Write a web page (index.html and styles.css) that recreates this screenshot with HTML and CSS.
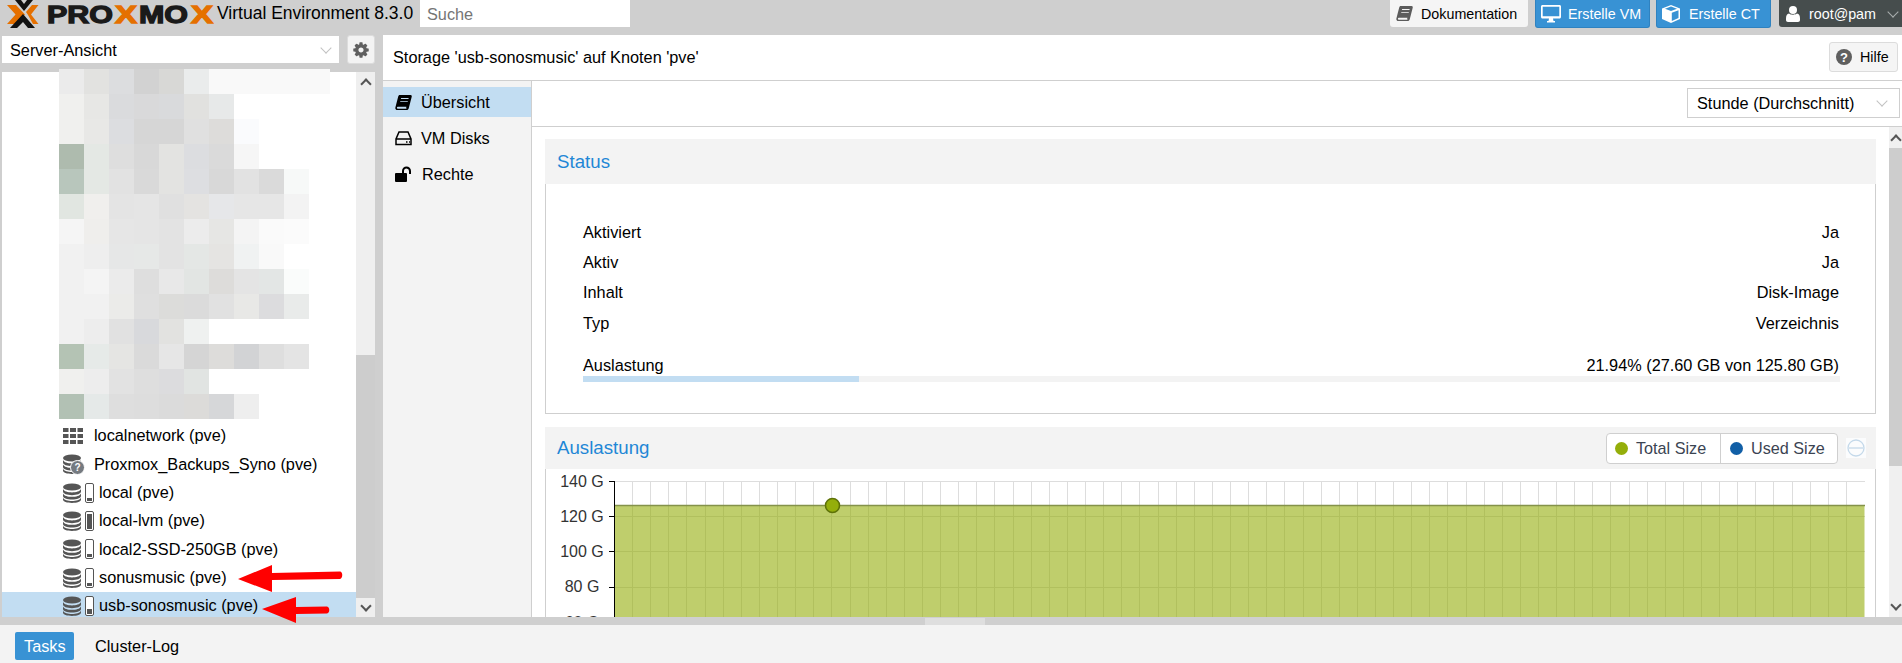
FILE: index.html
```html
<!DOCTYPE html>
<html lang="de">
<head>
<meta charset="utf-8">
<title>Proxmox Virtual Environment</title>
<link rel="stylesheet" href="styles.css">
</head>
<body>
<svg class="defs" width="0" height="0" aria-hidden="true">
  <symbol id="db" viewBox="0 0 18 20">
    <ellipse cx="9" cy="4" rx="9" ry="3.6"/>
    <path d="M0 6c1 2.4 5 3.4 9 3.4s8-1 9-3.4v2.6c0 2.2-4 3.6-9 3.6s-9-1.4-9-3.6z"/>
    <path d="M0 10.4c1 2.4 5 3.4 9 3.4s8-1 9-3.4V13c0 2.2-4 3.6-9 3.6S0 15.200 0 13z"/>
    <path d="M0 14.800c1 2.400 5 3.200 9 3.200s8-.8 9-3.200v1.800C18 18.800 14 20 9 20s-9-1.200-9-3.400z"/>
  </symbol>
  <symbol id="cog" viewBox="0 0 1792 1792">
    <path d="M1152 896q0-106-75-181t-181-75-181 75-75 181 75 181 181 75 181-75 75-181zm512-109v222q0 12-8 23t-20 13l-185 28q-19 54-39 91 35 50 107 138 10 12 10 25t-9 23q-27 37-99 108t-94 71q-12 0-26-9l-138-108q-44 23-91 38-16 136-29 186-7 28-36 28h-222q-14 0-24.500-8.500t-11.500-21.500l-28-184q-49-16-90-37l-141 107q-10 9-25 9-14 0-25-11-126-114-165-168-7-10-7-23 0-12 8-23 15-21 51-66.500t54-70.500q-27-50-41-99l-183-27q-13-2-21-12.500t-8-23.500v-222q0-12 8-23t19-13l186-28q14-46 39-92-40-57-107-138-10-12-10-24 0-10 9-23 26-36 98.500-107.500t94.500-71.500q13 0 26 10l138 107q44-23 91-38 16-136 29-186 7-28 36-28h222q14 0 24.500 8.500t11.500 21.500l28 184q49 16 90 37l142-107q9-9 24-9 13 0 25 10 129 119 165 170 7 8 7 22 0 12-8 23-15 21-51 66.500t-54 70.500q26 50 41 98l183 28q13 2 21 12.500t8 23.500z"/>
  </symbol>
  <symbol id="book" viewBox="0 0 18 18">
    <path d="M5 1h11.500c1 0 1.500.8 1.200 1.800l-3 11.700c-.3 1.300-1.200 2.500-2.700 2.500H2.700C1 17 0 15.700.4 14.200L3.400 2.600C3.600 1.600 4.200 1 5 1zm1.500 3.300-.3 1h8l.3-1zm-.8 3-.3 1h8l.3-1zM3 13.500c-.6 0-1 .4-1 1s.4 1 1 1h9.300c-.5-.5-.5-1.400-.2-2z" fill-rule="evenodd"/>
  </symbol>
</svg>

<div class="app">
  <header class="top">
    <div class="logo">
      <svg class="logo-x" width="46" height="28" viewBox="0 0 46 28">
        <path fill="#e57000" d="M7 5h9l9 9.500L16 24H7l8.500-9.500z"/>
        <path fill="#e57000" d="M38.500 5H32l-6 7 2 3 5 9h5.500L31 14.500z"/>
        <path fill="#111" d="M15 0h6l3 4 3-4h6L24 11zM10 28l13-14 12 14h-7l-5-6-6 6z"/>
      </svg>
      <svg class="logo-word" width="168" height="28" viewBox="46 0 168 28">
        <text x="47" y="23" textLength="66" lengthAdjust="spacingAndGlyphs" class="lw-k">PRO</text>
        <text x="115" y="23" textLength="22" lengthAdjust="spacingAndGlyphs" class="lw-o">X</text>
        <text x="139" y="23" textLength="49" lengthAdjust="spacingAndGlyphs" class="lw-k">MO</text>
        <text x="191" y="23" textLength="22" lengthAdjust="spacingAndGlyphs" class="lw-o">X</text>
      </svg>
    </div>
    <div class="version">Virtual Environment 8.3.0</div>
    <div class="search">Suche</div>
    <div class="top-actions">
      <div class="tbtn tbtn-light">
        <svg class="ti" width="17" height="17" fill="#5c5c5c"><use href="#book"/></svg>
        <span>Dokumentation</span>
      </div>
      <div class="tbtn tbtn-blue">
        <svg class="ti" width="20" height="18" viewBox="0 0 20 18" fill="#fff"><path fill-rule="evenodd" d="M1.500 0h17C19.300 0 20 .7 20 1.500v10.500c0 .8-.7 1.500-1.500 1.500H12l.5 2.500h1.500v1.500H6v-1.500h1.500L8 13.500H1.500C.7 13.500 0 12.800 0 12V1.500C0 .7.700 0 1.500 0zm.2 1.700v9.600h16.600V1.700z"/></svg>
        <span>Erstelle VM</span>
      </div>
      <div class="tbtn tbtn-blue">
        <svg class="ti" width="18" height="18" viewBox="0 0 18 18" fill="#fff"><path fill-rule="evenodd" d="M9 0l9 3.500v10.500L9 18 0 14V3.500zM3 3.700 9 6l6-2.300L9 1.500zM9.800 16l6.700-3V5.200L9.800 7.700z"/></svg>
        <span>Erstelle CT</span>
      </div>
      <div class="tbtn tbtn-dark">
        <svg class="ti" width="14" height="16" viewBox="0 0 14 16" fill="#fff"><circle cx="7" cy="4" r="4"/><path d="M3 7.500c1 .8 2.500 1.200 4 1.200s3-.4 4-1.200c2 .4 3 2 3 5V14c0 1-.8 2-2 2H2c-1.200 0-2-1-2-2v-1.500c0-3 1-4.600 3-5z"/></svg>
        <span>root@pam</span>
        <i class="chev chev-light"></i>
      </div>
    </div>
  </header>

  <div class="mid">
    <aside class="side">
      <div class="view-row">
        <div class="view-select"><span>Server-Ansicht</span><i class="chev"></i></div>
        <div class="gear"><svg width="18" height="18" fill="#5f5f5f"><use href="#cog"/></svg></div>
      </div>
      <div class="tree">
        <div class="tree-list">
          <div class="node">
            <svg class="n-ic n-wide" width="20" height="16" viewBox="0 0 20 16" fill="#555"><path d="M0 0h5.500v4H0zM7 0h6v4H7zM14.500 0H20v4h-5.500zM0 6h5.500v4H0zM7 6h6v4H7zM14.500 6H20v4h-5.500zM0 12h5.500v4H0zM7 12h6v4H7zM14.500 12H20v4h-5.500z"/></svg>
            <span>localnetwork (pve)</span>
          </div>
          <div class="node">
            <span class="n-wide n-stack">
              <svg width="18" height="20" fill="#555"><use href="#db"/></svg>
              <span class="q">?</span>
            </span>
            <span>Proxmox_Backups_Syno (pve)</span>
          </div>
          <div class="node">
            <svg class="n-db" width="18" height="20" fill="#555"><use href="#db"/></svg>
            <span class="phone"><b class="lvl-low"></b></span>
            <span>local (pve)</span>
          </div>
          <div class="node">
            <svg class="n-db" width="18" height="20" fill="#555"><use href="#db"/></svg>
            <span class="phone"><b class="lvl-high"></b></span>
            <span>local-lvm (pve)</span>
          </div>
          <div class="node">
            <svg class="n-db" width="18" height="20" fill="#555"><use href="#db"/></svg>
            <span class="phone"><b class="lvl-low"></b></span>
            <span>local2-SSD-250GB (pve)</span>
          </div>
          <div class="node">
            <svg class="n-db" width="18" height="20" fill="#555"><use href="#db"/></svg>
            <span class="phone"><b class="lvl-low"></b></span>
            <span>sonusmusic (pve)</span>
          </div>
          <div class="node node-sel">
            <svg class="n-db" width="18" height="20" fill="#555"><use href="#db"/></svg>
            <span class="phone"><b class="lvl-mid"></b></span>
            <span>usb-sonosmusic (pve)</span>
          </div>
        </div>
        <div class="tree-scroll">
          <div class="sb-btn"><i class="chev-up"></i></div>
          <div class="sb-track"></div>
          <div class="sb-thumb"></div>
          <div class="sb-btn"><i class="chev chev-dark"></i></div>
        </div>
      </div>
      <svg class="mosaic" width="275" height="350" viewBox="0 0 275 350" shape-rendering="crispEdges" aria-hidden="true">
        <rect x="0" y="0" width="25" height="25" fill="#ebebeb"/><rect x="25" y="0" width="25" height="25" fill="#e2e2e0"/><rect x="50" y="0" width="25" height="25" fill="#dcdddf"/><rect x="75" y="0" width="25" height="25" fill="#d2d2d2"/><rect x="100" y="0" width="25" height="25" fill="#d8d8d6"/><rect x="125" y="0" width="25" height="25" fill="#eaecec"/><rect x="150" y="0" width="121" height="25" fill="#f9f9f9"/>
        <rect x="0" y="25" width="25" height="25" fill="#f0f0ee"/><rect x="25" y="25" width="25" height="25" fill="#e7e7e5"/><rect x="50" y="25" width="25" height="25" fill="#dadbdd"/><rect x="75" y="25" width="25" height="25" fill="#d9d9da"/><rect x="100" y="25" width="25" height="25" fill="#d9dadc"/><rect x="125" y="25" width="25" height="25" fill="#e1e1df"/><rect x="150" y="25" width="25" height="25" fill="#e7e9e9"/>
        <rect x="0" y="50" width="25" height="25" fill="#f0f0ee"/><rect x="25" y="50" width="25" height="25" fill="#e8e8e6"/><rect x="50" y="50" width="25" height="25" fill="#dcdde0"/><rect x="75" y="50" width="25" height="25" fill="#d6d6d6"/><rect x="100" y="50" width="25" height="25" fill="#d6d6d6"/><rect x="125" y="50" width="25" height="25" fill="#e0e0e0"/><rect x="150" y="50" width="25" height="25" fill="#dddcda"/><rect x="175" y="50" width="25" height="25" fill="#fafbfd"/>
        <rect x="0" y="75" width="25" height="25" fill="#aebbae"/><rect x="25" y="75" width="25" height="25" fill="#e4e8e4"/><rect x="50" y="75" width="25" height="25" fill="#dedede"/><rect x="75" y="75" width="25" height="25" fill="#d8d8d8"/><rect x="100" y="75" width="25" height="25" fill="#e3e3e1"/><rect x="125" y="75" width="25" height="25" fill="#dcdde0"/><rect x="150" y="75" width="25" height="25" fill="#dadada"/><rect x="175" y="75" width="25" height="25" fill="#f6f6f6"/>
        <rect x="0" y="100" width="25" height="25" fill="#b8c6bc"/><rect x="25" y="100" width="25" height="25" fill="#e4e8e4"/><rect x="50" y="100" width="25" height="25" fill="#e2e2e2"/><rect x="75" y="100" width="25" height="25" fill="#d9d9d9"/><rect x="100" y="100" width="25" height="25" fill="#e3e3e1"/><rect x="125" y="100" width="25" height="25" fill="#dddee1"/><rect x="150" y="100" width="25" height="25" fill="#d8d8d8"/><rect x="175" y="100" width="25" height="25" fill="#e2e2e2"/><rect x="200" y="100" width="25" height="25" fill="#dadada"/><rect x="225" y="100" width="25" height="25" fill="#f7f9f8"/>
        <rect x="0" y="125" width="25" height="25" fill="#e1e6e1"/><rect x="25" y="125" width="25" height="25" fill="#f0efed"/><rect x="50" y="125" width="25" height="25" fill="#e4e4e4"/><rect x="75" y="125" width="25" height="25" fill="#e5e5e5"/><rect x="100" y="125" width="25" height="25" fill="#e0e0e0"/><rect x="125" y="125" width="25" height="25" fill="#e4e3e1"/><rect x="150" y="125" width="25" height="25" fill="#e6e7e9"/><rect x="175" y="125" width="25" height="25" fill="#e6e6e6"/><rect x="200" y="125" width="25" height="25" fill="#e6e6e6"/><rect x="225" y="125" width="25" height="25" fill="#f3f3f3"/>
        <rect x="0" y="150" width="25" height="25" fill="#f5f5f5"/><rect x="25" y="150" width="25" height="25" fill="#efeeec"/><rect x="50" y="150" width="25" height="25" fill="#e6e6e6"/><rect x="75" y="150" width="25" height="25" fill="#e5e5e5"/><rect x="100" y="150" width="25" height="25" fill="#e3e3e3"/><rect x="125" y="150" width="25" height="25" fill="#ececec"/><rect x="150" y="150" width="25" height="25" fill="#e6e6e4"/><rect x="175" y="150" width="25" height="25" fill="#f4f4f4"/><rect x="200" y="150" width="25" height="25" fill="#fafafa"/><rect x="225" y="150" width="25" height="25" fill="#fbfbfb"/>
        <rect x="0" y="175" width="25" height="25" fill="#f1f1f1"/><rect x="25" y="175" width="25" height="25" fill="#eeeeee"/><rect x="50" y="175" width="25" height="25" fill="#e6e7e7"/><rect x="75" y="175" width="25" height="25" fill="#e6e8e7"/><rect x="100" y="175" width="25" height="25" fill="#e3e3e3"/><rect x="125" y="175" width="25" height="25" fill="#e4e7e5"/><rect x="150" y="175" width="25" height="25" fill="#e5e4e2"/><rect x="175" y="175" width="25" height="25" fill="#f0f2f2"/><rect x="200" y="175" width="25" height="25" fill="#f9f9f9"/>
        <rect x="0" y="200" width="25" height="25" fill="#f1f1f1"/><rect x="25" y="200" width="25" height="25" fill="#f4f4f4"/><rect x="50" y="200" width="25" height="25" fill="#ebebeb"/><rect x="75" y="200" width="25" height="25" fill="#dedede"/><rect x="100" y="200" width="25" height="25" fill="#e8e8e8"/><rect x="125" y="200" width="25" height="25" fill="#e2e5e3"/><rect x="150" y="200" width="25" height="25" fill="#dddcda"/><rect x="175" y="200" width="25" height="25" fill="#e4e4e4"/><rect x="200" y="200" width="25" height="25" fill="#e3e6e5"/><rect x="225" y="200" width="25" height="25" fill="#fafcfb"/>
        <rect x="0" y="225" width="25" height="25" fill="#f1f1f1"/><rect x="25" y="225" width="25" height="25" fill="#f1f1f1"/><rect x="50" y="225" width="25" height="25" fill="#ebebe9"/><rect x="75" y="225" width="25" height="25" fill="#dfdfdf"/><rect x="100" y="225" width="25" height="25" fill="#dcdcda"/><rect x="125" y="225" width="25" height="25" fill="#dbdbdb"/><rect x="150" y="225" width="25" height="25" fill="#e1e1e1"/><rect x="175" y="225" width="25" height="25" fill="#e8e8e6"/><rect x="200" y="225" width="25" height="25" fill="#dcdcde"/><rect x="225" y="225" width="25" height="25" fill="#e9ebea"/>
        <rect x="0" y="250" width="25" height="25" fill="#f1f1f1"/><rect x="25" y="250" width="25" height="25" fill="#ededed"/><rect x="50" y="250" width="25" height="25" fill="#e1e1e1"/><rect x="75" y="250" width="25" height="25" fill="#d8d9dc"/><rect x="100" y="250" width="25" height="25" fill="#e2e2e0"/><rect x="125" y="250" width="25" height="25" fill="#eff1f0"/>
        <rect x="0" y="275" width="25" height="25" fill="#b4c3b4"/><rect x="25" y="275" width="25" height="25" fill="#e6eae8"/><rect x="50" y="275" width="25" height="25" fill="#e5e5e3"/><rect x="75" y="275" width="25" height="25" fill="#dadada"/><rect x="100" y="275" width="25" height="25" fill="#e6e6e6"/><rect x="125" y="275" width="25" height="25" fill="#d5d5d5"/><rect x="150" y="275" width="25" height="25" fill="#dddcda"/><rect x="175" y="275" width="25" height="25" fill="#d2d3d5"/><rect x="200" y="275" width="25" height="25" fill="#dedede"/><rect x="225" y="275" width="25" height="25" fill="#e4e4e4"/>
        <rect x="0" y="300" width="25" height="25" fill="#f0f0ee"/><rect x="25" y="300" width="25" height="25" fill="#ededed"/><rect x="50" y="300" width="25" height="25" fill="#e2e2e2"/><rect x="75" y="300" width="25" height="25" fill="#dedede"/><rect x="100" y="300" width="25" height="25" fill="#dcdcde"/><rect x="125" y="300" width="25" height="25" fill="#e1e4e2"/>
        <rect x="0" y="325" width="25" height="25" fill="#b2c1b4"/><rect x="25" y="325" width="25" height="25" fill="#e5e9e8"/><rect x="50" y="325" width="25" height="25" fill="#dedede"/><rect x="75" y="325" width="25" height="25" fill="#dddddd"/><rect x="100" y="325" width="25" height="25" fill="#dbdbdb"/><rect x="125" y="325" width="25" height="25" fill="#dcdbd9"/><rect x="150" y="325" width="25" height="25" fill="#d6d7d9"/><rect x="175" y="325" width="25" height="25" fill="#eeeeee"/>
      </svg>
    </aside>

    <main class="main">
      <div class="title-bar">
        <div class="title">Storage 'usb-sonosmusic' auf Knoten 'pve'</div>
        <div class="help">
          <svg width="16" height="16" viewBox="0 0 16 16" aria-hidden="true"><circle cx="8" cy="8" r="8" fill="#5f5f5f"/><text x="8" y="12.500" class="help-q">?</text></svg>
          <span>Hilfe</span>
        </div>
      </div>
      <div class="content">
        <nav class="nav">
          <div class="nav-item nav-sel">
            <svg width="17" height="17" fill="#000"><use href="#book"/></svg>
            <span>Übersicht</span>
          </div>
          <div class="nav-item">
            <svg width="17" height="15" viewBox="0 0 17 15" fill="none" stroke="#000" stroke-width="1.500"><path d="M4 1h9l3 7v5.500H1V8zM1.500 8h14"/><path d="M11 11h1.500M14 11h1" stroke-width="1.300"/></svg>
            <span>VM Disks</span>
          </div>
          <div class="nav-item">
            <svg width="18" height="16" viewBox="0 0 18 16" fill="#000"><rect x="0" y="7" width="12" height="9" rx="1"/><path d="M7 7V5a4.500 4.500 0 0 1 9 0v3h-2V5a2.500 2.500 0 0 0-5 0v2z"/></svg>
            <span>Rechte</span>
          </div>
        </nav>
        <div class="pane">
          <div class="pane-bar">
            <div class="range"><span>Stunde (Durchschnitt)</span><i class="chev"></i></div>
          </div>
          <div class="pane-body">
            <div class="panels">
              <section class="panel">
                <h2 class="panel-head status-head">Status</h2>
                <div class="status-body">
                  <div class="kv"><span>Aktiviert</span><span>Ja</span></div>
                  <div class="kv"><span>Aktiv</span><span>Ja</span></div>
                  <div class="kv"><span>Inhalt</span><span>Disk-Image</span></div>
                  <div class="kv"><span>Typ</span><span>Verzeichnis</span></div>
                  <div class="kv kv-usage"><span>Auslastung</span><span>21.94% (27.60 GB von 125.80 GB)</span></div>
                  <div class="bar"><div class="bar-fill"></div></div>
                </div>
              </section>
              <section class="panel panel-chart">
                <div class="panel-head chart-head">
                  <h2 class="chart-title">Auslastung</h2>
                  <div class="legend">
                    <div class="leg"><i class="dot dot-total"></i><span>Total Size</span></div>
                    <div class="leg leg-2"><i class="dot dot-used"></i><span>Used Size</span></div>
                  </div>
                  <div class="collapse"><svg width="20" height="20" viewBox="0 0 20 20" fill="none" stroke="#c4d9ea" stroke-width="1.300"><circle cx="10" cy="10" r="8"/><path d="M3 10h14"/></svg></div>
                </div>
                <div class="chart-body">
                  <svg class="chart" width="1329" height="200" viewBox="546 470 1329 200">
                    <path class="grid" d="M614.500 482.500H1865M614.500 517.500H1865M614.500 552.500H1865M614.500 588.500H1865M614.500 623.500H1865"/>
                    <path class="grid" d="M632.500 482v190m18-190v190m18-190v190m18-190v190m19-190v190m18-190v190m18-190v190m18-190v190m18-190v190m18-190v190m18-190v190m18-190v190m19-190v190m18-190v190m18-190v190m18-190v190m18-190v190m18-190v190m18-190v190m18-190v190m18-190v190m19-190v190m18-190v190m18-190v190m18-190v190m18-190v190m18-190v190m18-190v190m18-190v190m19-190v190m18-190v190m18-190v190m18-190v190m18-190v190m18-190v190m18-190v190m18-190v190m19-190v190m18-190v190m18-190v190m18-190v190m18-190v190m18-190v190m18-190v190m18-190v190m18-190v190m19-190v190m18-190v190m18-190v190m18-190v190m18-190v190m18-190v190m18-190v190m18-190v190m18-190v190m19-190v190m18-190v190m18-190v190m18-190v190m18-190v190m18-190v190m18-190v190m18-190v190m18-190v190m19-190v190m18-190v190m18-190v190m18-190v190"/>
                    <rect class="area" x="614.500" y="506.500" width="1250" height="170"/>
                    <path class="area-line" d="M614.500 506.500H1865"/>
                    <path class="axis" d="M614.500 482V672M609 482.500h6M609 517.500h6M609 552.500h6M609 588.500h6M609 623.500h6"/>
                    <text class="tick" x="582" y="487.500">140 G</text>
                    <text class="tick" x="582" y="522.500">120 G</text>
                    <text class="tick" x="582" y="557.500">100 G</text>
                    <text class="tick" x="582" y="593">80 G</text>
                    <text class="tick" x="582" y="628.500">60 G</text>
                    <circle class="pt" cx="832.500" cy="506.500" r="7"/>
                  </svg>
                </div>
              </section>
            </div>
            <div class="main-scroll">
              <div class="ms-btn"><i class="chev-up"></i></div>
              <div class="ms-thumb"></div>
              <div class="ms-track"></div>
              <div class="ms-btn ms-end"><i class="chev chev-dark"></i></div>
            </div>
          </div>
        </div>
      </div>
    </main>
  </div>

  <div class="split"><div class="split-handle"></div></div>

  <footer class="bottom">
    <div class="tab tab-on">Tasks</div>
    <div class="tab">Cluster-Log</div>
  </footer>

  <svg class="arrows" width="120" height="70" viewBox="230 560 120 70" aria-hidden="true">
    <path fill="#f00" d="M238 579l34-14v8l68-1.500c3 .3 3 6.500 0 7.500l-68 1v12z"/>
    <path fill="#f00" d="M262 609l34-12v10l31-.5c3 .5 3 6.500 0 7l-31 .5v9z"/>
  </svg>
</div>
</body>
</html>
```

FILE: styles.css
```css
* { box-sizing: border-box; }
html, body { margin: 0; height: 100%; overflow: hidden; }
body { font: 16.300px "Liberation Sans", Arial, sans-serif; color: #000; background: #cfcfcf; }
.defs { position: absolute; }
.app { position: relative; display: flex; flex-direction: column; height: 663px; }

/* header */
.top { display: flex; align-items: flex-start; height: 35px; flex: none; }
.logo { display: flex; width: 214px; height: 28px; flex: none; }
.logo svg { display: block; flex: none; }
.logo-word text { font: bold 24px "Liberation Sans", sans-serif; stroke-width: 1.300px; }
.lw-k { fill: #1a1a1a; stroke: #1a1a1a; }
.lw-o { fill: #e57000; stroke: #e57000; }
.version { margin-left: 3px; width: 203px; font-size: 17.500px; line-height: 26px; color: #000; flex: none; white-space: nowrap; }
.search { width: 210px; height: 27px; background: #fff; color: #757575; padding-left: 7px; line-height: 29px; flex: none; }
.top-actions { margin-left: auto; display: flex; gap: 7px; font-size: 14.300px; }
.tbtn { display: flex; align-items: center; height: 28px; border-radius: 0 0 3px 3px; padding-left: 6px; }
.tbtn .ti { flex: none; }
.tbtn-light { width: 138px; height: 27px; background: #f5f5f5; gap: 8px; }
.tbtn-blue { width: 115px; background: #3892d4; color: #fff; gap: 7px; border: 1px solid #2f82c0; border-top: 0; padding-left: 5px; }
.tbtn-blue + .tbtn-blue { margin-left: -1px; gap: 9px; }
.tbtn-dark { width: 123px; height: 27px; background: #464d4d; color: #fff; gap: 9px; padding-left: 7px; margin-left: 1px; border-radius: 0 0 0 3px; }
.tbtn-dark .chev { margin-left: 4px; }

/* chevrons */
.chev, .chev-up { display: inline-block; width: 8px; height: 8px; flex: none; transform: rotate(45deg); border-right: 1.500px solid #c2c2c2; border-bottom: 1.500px solid #c2c2c2; margin-top: -4px; }
.chev-light { border-color: #a9aeae; }
.chev-dark { border-right: 2.500px solid #555; border-bottom: 2.500px solid #555; }
.chev-up { transform: rotate(225deg); border-right: 2.500px solid #555; border-bottom: 2.500px solid #555; margin-top: 5px; }

/* layout */
.mid { display: flex; height: 582px; flex: none; }
.side { position: relative; width: 373px; margin-left: 2px; flex: none; display: flex; flex-direction: column; }
.main { flex: 1; margin-left: 8px; min-width: 0; background: #fff; display: flex; flex-direction: column; }

/* left */
.view-row { display: flex; height: 37px; flex: none; padding-top: 1px; }
.view-select { width: 337px; height: 27px; background: #fff; display: flex; justify-content: space-between; align-items: center; padding: 1px 9px 0 8px; }
.gear { width: 28px; height: 29px; margin: -1px 0 0 8px; background: #f3f3f3; border: 1px solid #dcdcdc; border-radius: 3px; display: flex; align-items: center; justify-content: center; }
.tree { flex: 1; min-height: 0; display: flex; background: #fff; overflow: hidden; }
.tree-list { flex: 1; min-width: 0; display: flex; flex-direction: column; justify-content: flex-end; margin-bottom: -3px; }
.node { display: flex; align-items: center; height: 28.330px; padding-left: 61px; flex: none; }
.node-sel { background: #c2ddf2; }
.n-wide { margin-right: 11px; flex: none; }
.n-stack { position: relative; display: block; width: 20px; height: 20px; }
.n-stack svg { display: block; }
.q { position: absolute; left: 7px; top: 6px; width: 15px; height: 15px; border-radius: 50%; background: #757a80; border: 1px solid #fff; color: #fff; font: bold 10px/13px "Liberation Sans", sans-serif; text-align: center; }
.n-db { flex: none; }
.phone { position: relative; width: 9px; height: 20px; margin: 0 5px 0 4px; border: 1px solid #555; border-radius: 2px; background: #fff; flex: none; }
.phone b { position: absolute; left: 1px; right: 1px; bottom: 1px; background: #555; }
.lvl-low { height: 3px; }
.lvl-mid { height: 5px; }
.lvl-high { height: 15px; }
.tree-scroll { width: 19px; flex: none; display: flex; flex-direction: column; background: #efefef; }
.sb-btn { height: 19px; flex: none; display: flex; justify-content: center; align-items: center; }
.sb-track { height: 264px; flex: none; }
.sb-thumb { flex: 1; background: #cdcdcd; }
.mosaic { position: absolute; left: 57px; top: 34px; }

/* main */
.title-bar { height: 46px; flex: none; display: flex; align-items: center; justify-content: space-between; padding: 0 4px 0 10px; border-bottom: 1px solid #cfcfcf; }
.help { width: 69px; height: 30px; display: flex; align-items: center; gap: 8px; padding-left: 6px; background: #f5f5f5; border: 1px solid #dcdcdc; border-radius: 3px; margin-top: -1px; font-size: 14.300px; }
.help-q { font: bold 13px "Liberation Sans", sans-serif; fill: #fff; text-anchor: middle; }
.content { flex: 1; min-height: 0; display: flex; }
.nav { width: 149px; flex: none; background: #f3f3f3; border-right: 1px solid #cfcfcf; padding-top: 6px; display: flex; flex-direction: column; gap: 6px; }
.nav-item { height: 30px; display: flex; align-items: center; gap: 9px; padding-left: 12px; }
.nav-item svg { flex: none; }
.nav-sel { background: #c2ddf2; }
.pane { flex: 1; min-width: 0; display: flex; flex-direction: column; }
.pane-bar { height: 46px; flex: none; display: flex; justify-content: flex-end; align-items: center; padding: 0 2px 1px 0; border-bottom: 1px solid #cfcfcf; }
.range { width: 213px; height: 30px; display: flex; align-items: center; justify-content: space-between; padding: 0 13px 0 9px; border: 1px solid #cfcfcf; }
.pane-body { flex: 1; min-height: 0; display: flex; }
.panels { flex: 1; min-width: 0; padding: 12px 13px 0 13px; display: flex; flex-direction: column; gap: 13px; overflow: hidden; }
.panel { flex: none; }
.panel-chart { flex: 1; min-height: 0; display: flex; flex-direction: column; }
.panel-head { margin: 0; background: #f3f3f3; color: #1f87d6; font-weight: normal; font-size: 18.700px; }
.status-head { height: 45px; line-height: 45px; padding-left: 12px; }
.status-body { height: 230px; border: 1px solid #cfcfcf; border-top: 0; padding: 33px 36px 0 37px; }
.kv { display: flex; justify-content: space-between; height: 30.200px; line-height: 30px; }
.kv-usage { margin-top: 12px; height: 26px; }
.bar { height: 6px; background: #f3f3f3; margin-right: -1px; }
.bar-fill { width: 21.940%; height: 100%; background: #c2ddf2; }
.chart-head { height: 42px; display: flex; align-items: center; padding-left: 12px; flex: none; }
.chart-title { margin: 0; font: inherit; flex: 1; }
.legend { display: flex; height: 31px; width: 232px; background: #fff; border: 1px solid #cfcfcf; border-radius: 4px; color: #3b4452; font-size: 16.200px; }
.leg { width: 113px; display: flex; align-items: center; gap: 8px; padding-left: 8px; }
.leg-2 { flex: 1; border-left: 1px solid #cfcfcf; padding-left: 9px; }
.dot { width: 13px; height: 13px; border-radius: 50%; flex: none; }
.dot-total { background: #94ae0a; }
.dot-used { background: #115fa6; }
.collapse { width: 20px; height: 20px; margin: 0 10px 0 8px; background: #fbfcfd; }
.collapse svg { display: block; }
.chart-body { flex: 1; min-height: 0; overflow: hidden; border-left: 1px solid #cfcfcf; border-right: 1px solid #cfcfcf; }
.chart { display: block; }
.grid { fill: none; stroke: #ddd; stroke-width: 1; }
.area { fill: #94ae0a; fill-opacity: .6; }
.area-line { fill: none; stroke: #84924a; stroke-width: 1.500; }
.axis { fill: none; stroke: #000; stroke-width: 1; }
.tick { font: 16px "Liberation Sans", sans-serif; fill: #333; text-anchor: middle; }
.pt { fill: #94ae0a; stroke: #5e7208; stroke-width: 1.500; }
.main-scroll { width: 13px; flex: none; display: flex; flex-direction: column; background: #f0f0f0; overflow: hidden; }
.ms-btn { height: 21px; flex: none; display: flex; justify-content: center; align-items: center; }
.ms-thumb { height: 318px; flex: none; background: #cdcdcd; }
.ms-track { flex: 1; }
.ms-end { margin-top: auto; }

/* bottom */
.split { height: 8px; flex: none; display: flex; justify-content: center; }
.split-handle { width: 60px; height: 7px; background: #dedede; margin: 1px 0 0 7px; }
.bottom { flex: 1; background: #f3f3f3; display: flex; align-items: flex-start; gap: 9px; padding: 7px 0 0 15px; }
.tab { height: 28px; line-height: 28px; padding: 0 12px; }
.tab-on { width: 59px; background: #3892d4; color: #fff; border-radius: 2px; padding: 0 0 0 9px; }
.arrows { position: absolute; left: 230px; top: 560px; }
```
